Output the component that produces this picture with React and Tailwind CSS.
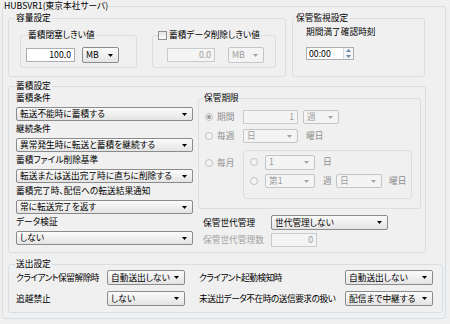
const GROUP = 'rounded-[3px] border border-[#d5dfe5]'
const GREY = 'text-[#8d8d8d]'

function Arrow({ disabled }) {
  return (
    <svg width="5" height="3" viewBox="0 0 5 3" className="shrink-0">
      <path d="M0 0h5L2.5 3z" fill={disabled ? '#a3a3a3' : '#000'} />
    </svg>
  )
}

function Select({ value, className = '', disabled }) {
  return (
    <div
      className={`flex shrink-0 items-center justify-between rounded-[2px] border pl-[3px] pr-[5px] leading-[12px] ${
        disabled
          ? 'border-[#c3c6c9] bg-[#f4f4f4] text-[#9c9c9c]'
          : 'border-[#8b8b8b] bg-linear-to-b from-[#fbfbfb] to-[#e4e4e4] text-black'
      } ${className}`}
    >
      <span className="truncate">{value}</span>
      <Arrow disabled={disabled} />
    </div>
  )
}

function TextBox({ value, className = '', disabled }) {
  return (
    <div
      className={`flex shrink-0 items-center justify-end border px-[3px] leading-[12px] ${
        disabled ? 'border-[#c9cbcd] bg-[#f4f4f4] text-[#9c9c9c]' : 'border-[#abadb3] bg-white text-black'
      } ${className}`}
    >
      {value}
    </div>
  )
}

function Radio({ checked }) {
  return (
    <span className="flex h-[8px] w-[8px] shrink-0 items-center justify-center rounded-full border border-[#c2c2c2] bg-[#f4f4f4]">
      {checked && <span className="h-[4px] w-[4px] rounded-full bg-[#9a9a9a]" />}
    </span>
  )
}

function Spinner() {
  return (
    <div className="flex h-[11px] w-[10px] flex-col border-l border-[#d6dbe0] bg-[#f3f5f8]">
      <div className="flex flex-1 items-center justify-center">
        <svg width="5" height="3" viewBox="0 0 5 3">
          <path d="M0 3h5L2.5 0z" fill="#6d86a3" />
        </svg>
      </div>
      <div className="flex flex-1 items-center justify-center">
        <svg width="5" height="3" viewBox="0 0 5 3">
          <path d="M0 0h5L2.5 3z" fill="#6d86a3" />
        </svg>
      </div>
    </div>
  )
}

function LeftField({ label, value }) {
  return (
    <div className="flex flex-col">
      <div className="h-[12px]">{label}</div>
      <Select value={value} className="mt-[3px] mb-[2px] h-[14px] w-[177px]" />
    </div>
  )
}

export default function App() {
  return (
    <div className="h-[324px] w-[450px] overflow-hidden bg-[#f0f0f0] font-['Noto_Sans_CJK_JP',sans-serif] text-[8.7px] leading-[12px] text-black [font-feature-settings:'palt']">
      <fieldset className={`ml-[2px] h-[319px] w-[444px] ${GROUP}`}>
        <legend className="ml-[1px]">HUBSVR1(東京本社サーバ)</legend>
        <div className="flex flex-col pl-[5px]">
          {/* 容量設定 / 保管監視設定 */}
          <div className="flex gap-[6px]">
            <fieldset className={`h-[65px] w-[278px] ${GROUP}`}>
              <legend className="ml-[6px] px-[1px]">容量設定</legend>
              <div className="flex gap-[15px] pl-[11px] pt-[5px]">
                <fieldset className={`h-[39px] w-[117px] ${GROUP}`}>
                  <legend className="ml-[6px] px-[1px]">蓄積閉塞しきい値</legend>
                  <div className="flex items-center gap-[7px] pl-[5px] pt-[6px]">
                    <TextBox value="100.0" className="h-[14px] w-[49px]" />
                    <Select value="MB" className="h-[16px] w-[37px]" />
                  </div>
                </fieldset>
                <fieldset className={`h-[39px] w-[124px] ${GROUP}`}>
                  <legend className="ml-[5px] flex items-center gap-[2px] pr-[1px]">
                    <span className="h-[9px] w-[9px] border border-[#8e8f8f] bg-linear-to-b from-[#e6e6e6] to-[#fbfbfb]" />
                    蓄積データ削除しきい値
                  </legend>
                  <div className="flex items-center gap-[13px] pl-[14px] pt-[6px]">
                    <TextBox value="0.0" className="h-[14px] w-[48px]" disabled />
                    <Select value="MB" className="h-[16px] w-[36px]" disabled />
                  </div>
                </fieldset>
              </div>
            </fieldset>
            <fieldset className={`h-[65px] w-[133px] ${GROUP}`}>
              <legend className="ml-[2px] px-[1px]">保管監視設定</legend>
              <div className="flex flex-col pl-[13px] pt-[2px]">
                <div>期間満了確認時刻</div>
                <div className="mt-[9px] flex h-[13px] w-[48px] items-center justify-between border border-[#abadb3] bg-white pl-[2px]">
                  00:00
                  <Spinner />
                </div>
              </div>
            </fieldset>
          </div>

          {/* 蓄積設定 */}
          <fieldset className={`mt-[3px] h-[173px] w-[418px] ${GROUP}`}>
            <legend className="ml-[6px] px-[1px]">蓄積設定</legend>
            <div className="flex gap-[5px] pl-[7px]">
              <div className="flex w-[177px] flex-col">
                <LeftField label="蓄積条件" value="転送不能時に蓄積する" />
                <LeftField label="継続条件" value="異常発生時に転送と蓄積を継続する" />
                <LeftField label="蓄積ファイル削除基準" value="転送または送出完了時に直ちに削除する" />
                <LeftField label="蓄積完了時、配信への転送結果通知" value="常に転送完了を返す" />
                <LeftField label="データ検証" value="しない" />
              </div>

              <div className="flex w-[223px] flex-col">
                <fieldset className={`h-[117px] w-[223px] ${GROUP}`}>
                  <legend className="ml-[5px]">保管期限</legend>
                  <div className={`flex flex-col pl-[6px] pt-[6px] ${GREY}`}>
                    <div className="flex h-[14px] items-center">
                      <div className="flex w-[38px] items-center gap-[4px]">
                        <Radio checked />
                        期間
                      </div>
                      <TextBox value="1" className="h-[14px] w-[55px]" disabled />
                      <Select value="週" className="ml-[5px] h-[14px] w-[36px]" disabled />
                    </div>
                    <div className="mt-[5px] flex h-[14px] items-center">
                      <div className="flex w-[38px] items-center gap-[4px]">
                        <Radio />
                        毎週
                      </div>
                      <Select value="日" className="h-[14px] w-[55px]" disabled />
                      <span className="ml-[8px]">曜日</span>
                    </div>
                    <div className="mt-[7px] flex items-start">
                      <div className="mt-[7px] flex w-[38px] items-center gap-[4px]">
                        <Radio />
                        毎月
                      </div>
                      <div className="flex h-[49px] w-[169px] flex-col rounded-[3px] border border-[#d5dfe5] pl-[6px] pt-[4px]">
                        <div className="flex h-[14px] items-center">
                          <Radio />
                          <Select value="1" className="ml-[7px] h-[15px] w-[50px]" disabled />
                          <span className="ml-[8px]">日</span>
                        </div>
                        <div className="mt-[5px] flex h-[14px] items-center">
                          <Radio />
                          <Select value="第1" className="ml-[7px] h-[14px] w-[50px]" disabled />
                          <span className="ml-[8px] w-[13px]">週</span>
                          <Select value="日" className="h-[14px] w-[46px]" disabled />
                          <span className="ml-[7px]">曜日</span>
                        </div>
                      </div>
                    </div>
                  </div>
                </fieldset>
                <div className="mt-[6px] flex h-[15px] items-center pl-[5px]">
                  <span className="w-[68px]">保管世代管理</span>
                  <Select value="世代管理しない" className="h-[15px] w-[117px]" />
                </div>
                <div className="mt-[3px] flex h-[14px] items-center pl-[5px]">
                  <span className="w-[68px] text-[#a0a0a0]">保管世代管理数</span>
                  <TextBox value="0" className="h-[14px] w-[46px]" disabled />
                </div>
              </div>
            </div>
          </fieldset>

          {/* 送出設定 */}
          <fieldset className={`mt-[6px] h-[54px] w-[435px] ${GROUP}`}>
            <legend className="ml-[6px] px-[1px] leading-[10px]">送出設定</legend>
            <div className="mt-[1px] grid grid-cols-[91px_78px_160px_88px] items-center gap-y-[6px] pl-[7px]">
              <div className="tracking-[-0.5px]">クライアント保留解除時</div>
              <Select value="自動送出しない" className="h-[15px] w-[78px]" />
              <div className="pl-[14px] tracking-[-0.5px]">クライアント起動検知時</div>
              <Select value="自動送出しない" className="h-[15px] w-[88px]" />
              <div>追越禁止</div>
              <Select value="しない" className="h-[15px] w-[78px]" />
              <div className="whitespace-nowrap pl-[14px] tracking-[-0.5px]">未送出データ不在時の送信要求の扱い</div>
              <Select value="配信まで中継する" className="h-[15px] w-[88px]" />
            </div>
          </fieldset>
        </div>
      </fieldset>
    </div>
  )
}
